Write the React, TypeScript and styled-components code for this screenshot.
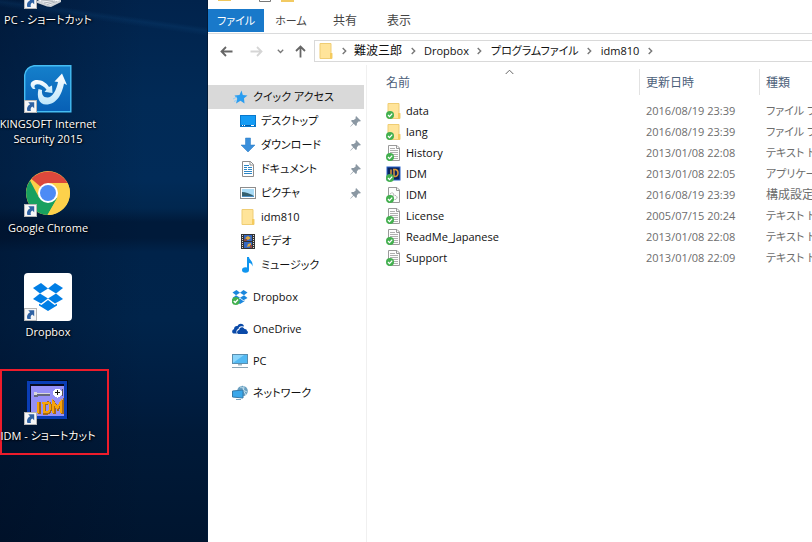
import React from "react";
import styled, { createGlobalStyle } from "styled-components";

const Global = createGlobalStyle`
  *, *::before, *::after { box-sizing: border-box; }
  html, body { margin: 0; padding: 0; overflow: hidden; }
  body, button {
    font-family: "Open Sans", "Noto Sans CJK JP", sans-serif;
    font-size: 11px;
    font-feature-settings: "palt";
    line-height: 16px;
  }
  button { border: 0; padding: 0; margin: 0; background: none; color: inherit; }
  a { color: inherit; text-decoration: none; }
  svg { display: block; flex: none; }
`;

const Screen = styled.div`
  display: grid;
  grid-template-columns: 208px minmax(0, 1fr);
  height: 100vh;
  overflow: hidden;
`;

/* ---------- Desktop ---------- */

const Desktop = styled.aside`
  overflow: hidden;
  border-right: 1px solid #011a38;
  background:
    linear-gradient(8deg, transparent 0 72%, rgba(20, 90, 150, 0.16) 76%, transparent 79%) 0 0 / 100% 100px no-repeat,
    linear-gradient(to right, rgba(0, 10, 30, 0.35), transparent 70%),
    linear-gradient(
      to bottom,
      #01234c 0,
      #012a56 100px,
      #012b58 180px,
      #01274f 208px,
      #001a3a 222px,
      #001a3a 238px,
      #00234a 252px,
      #00244b 320px,
      #001d40 400px,
      #001a39 432px,
      #00152f 100%
    );
`;

const ShortcutList = styled.div`
  display: grid;
  grid-template-columns: 96px;
  grid-auto-rows: 104px;
  margin-top: -39px;
`;

const Shortcut = styled.a`
  position: relative;
  display: flex;
  flex-direction: column;
  align-items: center;
  gap: 3px;
  color: #fff;
  text-shadow: 1px 1px 2px #000, 0 0 2px #000;
`;

const ShortcutIcon = styled.span`
  position: relative;
  width: 48px;
  height: 48px;
  flex: none;
`;

const ArrowBadge = styled.span`
  position: absolute;
  left: 0;
  bottom: 0;
`;

const ShortcutLabel = styled.span`
  z-index: 1;
  line-height: 15px;
  text-align: center;
  white-space: pre;
`;

const Highlight = styled.span`
  position: absolute;
  inset: -8px -13px 26px 0;
  border: 2px solid #ed1c2b;
`;

/* ---------- Explorer window ---------- */

const Explorer = styled.main`
  display: flex;
  flex-direction: column;
  min-width: 0;
  overflow: hidden;
  background: #fff;
  color: #111;
`;

const TitleStrip = styled.div`
  display: flex;
  align-items: flex-start;
  height: 9px;
  padding-left: 10px;
`;

const Ribbon = styled.div`
  display: flex;
  height: 25px;
  border-bottom: 1px solid #dadbdc;
`;

const Tab = styled.button<{ $primary?: boolean; $kanji?: boolean }>`
  width: ${(p) => (p.$primary ? 56 : 54)}px;
  height: 23px;
  background: ${(p) => (p.$primary ? "#1979ca" : "transparent")};
  color: ${(p) => (p.$primary ? "#fff" : "#444")};
  font-size: ${(p) => (p.$kanji ? 12 : 11)}px;
`;

const AddressRow = styled.div`
  display: flex;
  align-items: center;
  height: 28px;
  margin-top: 3px;
  padding-left: 12px;
`;

const NavButton = styled.button<{ $gap?: number }>`
  display: flex;
  align-items: center;
  height: 22px;
  margin-left: ${(p) => p.$gap ?? 0}px;
`;

const AddressBox = styled.nav`
  display: flex;
  flex: 1;
  align-items: center;
  min-width: 0;
  height: 22px;
  margin-left: 7px;
  padding-left: 3px;
  border: 1px solid #d9d9d9;
  border-right: 0;
  white-space: nowrap;
`;

const Crumb = styled.span`
  display: flex;
  align-items: center;
`;

const CrumbButton = styled.button<{ $kanji?: boolean }>`
  font-size: ${(p) => (p.$kanji ? 12 : 11)}px;
`;

const Separator = styled.span<{ $first?: boolean }>`
  display: flex;
  justify-content: center;
  width: ${(p) => (p.$first ? 20 : 22)}px;
`;

const Body = styled.div`
  display: grid;
  grid-template-columns: 159px minmax(0, 1fr);
  flex: 1;
  min-height: 0;
`;

const NavPane = styled.nav`
  padding: 20px 2px 0 0;
  border-right: 1px solid #f0f0f0;
`;

const NavItem = styled.a<{ $level?: number; $active?: boolean; $spaced?: boolean }>`
  display: flex;
  align-items: center;
  gap: 5px;
  height: 24px;
  margin-top: ${(p) => (p.$spaced ? 8 : 0)}px;
  padding: 0 3px 0 ${(p) => (p.$level ? 32 : 24)}px;
  background: ${(p) => (p.$active ? "#d9d9d9" : "transparent")};
  white-space: nowrap;
`;

const NavText = styled.span`
  flex: 1;
`;

const Files = styled.section`
  min-width: 0;
  padding-left: 13px;
  overflow: hidden;
`;

const Table = styled.table`
  width: 100%;
  table-layout: fixed;
  border-collapse: collapse;
`;

const HeadCell = styled.th<{ $w?: number }>`
  position: relative;
  width: ${(p) => (p.$w ? `${p.$w}px` : "auto")};
  height: 35px;
  padding: 0 0 0 6px;
  color: #4c607a;
  font-size: 12px;
  font-weight: 400;
  text-align: left;
  vertical-align: middle;
  &:not(:last-child)::after {
    content: "";
    position: absolute;
    right: 0;
    top: 4px;
    height: 26px;
    border-right: 1px solid #e2e2e2;
  }
`;

const SortMark = styled.span`
  position: absolute;
  top: 4px;
  left: 50%;
  margin-left: -5px;
`;

const Cell = styled.td<{ $soft?: boolean; $kanji?: boolean }>`
  height: 21px;
  padding: 0 0 0 6px;
  overflow: hidden;
  color: ${(p) => (p.$soft ? "#6d6d6d" : "#111")};
  font-size: ${(p) => (p.$kanji ? 12 : 11)}px;
  white-space: nowrap;
`;

const FileName = styled.span`
  display: flex;
  align-items: center;
  gap: 4px;
`;

/* ---------- Icons ---------- */

const ShortcutArrow = () => (
  <svg width="13" height="13" viewBox="0 0 13 13">
    <rect x=".5" y=".5" width="12" height="12" fill="#f6f6f6" stroke="#b5b5b5" />
    <path d="M4.2 2.3h6v6L8.3 6.500C6.800 7.500 6.300 8.900 6.900 11H3.400C2.300 8.300 3.400 5.700 6.100 4.200Z" fill="#2f62a3" />
  </svg>
);

const DriveIcon = () => (
  <svg width="48" height="48" viewBox="0 0 48 48">
    <path d="M12 40l22-2 3 1v2l-10 5-4-.5-11-4z" fill="#cfd3d6" />
    <path d="M13 39l21-2 2 2-10 5z" fill="#f3f4f5" />
    <path d="M17 40l12-1M20 42l11-2M23 43.500l10-3" stroke="#aeb4b9" />
  </svg>
);

const KingsoftIcon = () => (
  <svg width="48" height="48" viewBox="0 0 48 48">
    <defs>
      <linearGradient id="ks" x1="0" y1="0" x2="0" y2="1">
        <stop offset="0" stopColor="#1580cb" />
        <stop offset="1" stopColor="#075fb5" />
      </linearGradient>
      <linearGradient id="ksw" x1="0" y1="0" x2="0" y2="1">
        <stop offset="0" stopColor="#fff" />
        <stop offset="1" stopColor="#bfe6fb" />
      </linearGradient>
    </defs>
    <path d="M10 .7H46.800V46.800H.7V10Q2 2 10 .7Z" fill="url(#ks)" stroke="#45bdf3" strokeWidth="1.400" />
    <path d="M9 24C5.500 21 6 17 10 15.500 16 14 22 17 25 22L28 20.500 28.500 28 20.500 27 22.500 24.500C19 20 13.500 18 11 20 10 21.500 10.500 22.500 11.500 24Z" fill="url(#ksw)" />
    <path d="M14.500 24C12.500 32 15 39.500 22 39.500 33 39.500 38 29 40 18.500L43 20 38 8.500 30.500 16.500 34 17C32.500 25 28.500 32.500 23.500 32.500 19 32.500 17.500 29 18 25Z" fill="url(#ksw)" />
    <path d="M20 27.500l8 1.500" fill="none" stroke="#0a63b3" strokeWidth=".8" />
  </svg>
);

const ChromeIcon = () => (
  <svg width="48" height="48" viewBox="0 0 48 48">
    <circle cx="24" cy="24" r="22" fill="#fcd04a" />
    <path d="M24 24L7.500 10A22 22 0 0 1 43.500 14H24Z" fill="#dc483c" />
    <path d="M6 11.500A22 22 0 0 0 23.500 46L33 29.500 24 24 15 28.500Z" fill="#18a05f" />
    <path d="M24 14H43.500A22 22 0 0 1 23.500 46L33 29.500Z" fill="#fdd14b" />
    <circle cx="24" cy="24" r="10" fill="#fff" />
    <circle cx="24" cy="24" r="8" fill="#4c8bf5" />
  </svg>
);

const DropboxMark = ({ color = "#007ee5" }: { color?: string }) => (
  <g fill={color}>
    <path d="M17 10L24 15.500 16 20.500 9 15Z" />
    <path d="M31 10L39 15 32 20.500 24 15.500Z" />
    <path d="M16 20.500L24 25.500 17 30.500 9 26Z" />
    <path d="M32 20.500L39 26 31 30.500 24 25.500Z" />
    <path d="M24 27L30.500 32 33 30.700V32.500L24 38 15 32.500V30.700L17.500 32Z" />
  </g>
);

const DropboxIcon = () => (
  <svg width="48" height="48" viewBox="0 0 48 48">
    <rect width="48" height="48" rx="4" fill="#fff" />
    <DropboxMark />
  </svg>
);

const IdmIcon = () => (
  <svg width="48" height="48" viewBox="0 0 48 48" shapeRendering="crispEdges">
    <rect x="5" y="3" width="39" height="38" fill="#00081c" />
    <rect x="3" y="4" width="40" height="38" fill="#0a3db5" />
    <rect x="6" y="7" width="34" height="32" fill="#080b22" />
    <rect x="7" y="9" width="33" height="30" fill="#9590f8" />
    <path d="M10 16h4v1h12v2H14v1h-4z" fill="#66697c" />
    <path d="M10 15h3v1h13v1H13v1h-3z" fill="#d8d8dc" />
    <circle cx="33.500" cy="16" r="4.500" fill="#fff" />
    <path d="M31 15h5v1h-5zM33 13h1v5h-1z" fill="#111" />
    <path d="M38 12h1v7h-1z" fill="#555" />
    <g fill="none" stroke="#a96a12" strokeWidth="3">
      <path d="M15.500 25v12M20.500 25v11h3q3 0 3-5.500t-3-4.500h-5M30 37V26l4 6 4-6v11" />
    </g>
    <g fill="none" stroke="#f6a30a" strokeWidth="2">
      <path d="M14 25v11M20 25v10h3q3 0 3-5t-3-4h-5M29 36V25l4 6 4-6v11" />
    </g>
  </svg>
);

const SmallIcon = ({ children }: { children: React.ReactNode }) => (
  <svg width="16" height="16" viewBox="0 0 16 16">{children}</svg>
);

const FolderShape = () => (
  <>
    <path d="M2 .5h11v9l1 1v5H2z" fill="#ffe49a" stroke="#efcd74" />
    <path d="M12 10h2v5.500h-2z" fill="#f5cb5d" />
  </>
);

const CheckBadge = () => (
  <>
    <circle cx="4" cy="12" r="4" fill="#43b04f" />
    <path d="M2 12l1.500 1.600L6.200 10.600" fill="none" stroke="#fff" strokeWidth="1.300" />
  </>
);

const PageShape = ({ gear }: { gear?: boolean }) => (
  <>
    <path d="M2.500 .5H11l2.500 2.500v12.500h-11z" fill="#fdfdfd" stroke="#9a9a9a" />
    <path d="M10.500 .5v3h3" fill="none" stroke="#9a9a9a" />
    {gear ? (
      <g fill="none" stroke="#999">
        <circle cx="6" cy="7.500" r="1.700" strokeDasharray="1 .7" />
        <circle cx="9" cy="10.500" r="2" strokeDasharray="1 .7" />
      </g>
    ) : (
      <path d="M4 3.500h5M4 5.500h8M4 7.500h8M4 9.500h8M4 11.500h8M4 13.500h8" stroke="#b0b0b0" />
    )}
  </>
);

type FileKind = "folder" | "text" | "app" | "config";

const FileIcon = ({ kind }: { kind: FileKind }) => (
  <SmallIcon>
    {kind === "folder" && <FolderShape />}
    {kind === "text" && <PageShape />}
    {kind === "config" && <PageShape gear />}
    {kind === "app" && (
      <>
        <rect x="1" y="1" width="13" height="13" fill="#0b2560" stroke="#2a62c9" />
        <path d="M5 3.500v7M8 3.500v7h1.500q2.500-.5 2.500-3.500T9.500 3.500H7" fill="none" stroke="#d9993a" strokeWidth="1.500" />
      </>
    )}
    <CheckBadge />
  </SmallIcon>
);

const StarIcon = () => (
  <SmallIcon>
    <path d="M9.500 1.500L10.800 6 15.500 6.500 12 9.300 12.500 14.500 8.500 11.700 4 14.500 5.300 9.700 2.500 6.500 7.500 6Z" fill="#2a9df0" />
    <path d="M5 8L1 10M5 11L2 12.500" stroke="#8fcdf8" />
  </SmallIcon>
);
const DesktopIcon = () => (
  <SmallIcon>
    <rect x=".5" y="2.500" width="15" height="11" fill="#149cf5" stroke="#0878cc" />
    <path d="M1 12.500h14" stroke="#055da8" />
    <path d="M2 12.500h1M4 12.500h1M11 12.500h3" stroke="#fff" />
  </SmallIcon>
);
const DownloadIcon = () => (
  <SmallIcon>
    <path d="M5.500 1h5v7H15L8 15 1 8h4.500z" fill="#3a8fdb" stroke="#2678c2" strokeWidth=".5" />
  </SmallIcon>
);
const DocumentIcon = () => (
  <SmallIcon>
    <path d="M2.500 .5h8l3 3v12h-11z" fill="#fff" stroke="#8c8c8c" />
    <path d="M10 .5V4h3.500" fill="none" stroke="#8c8c8c" />
    <path d="M4 4.500h5M4 6.500h3M8 6.500h4M4 8.500h3M8 8.500h4M4 10.500h8M4 12.500h8" stroke="#2d86c5" />
  </SmallIcon>
);
const PictureIcon = () => (
  <SmallIcon>
    <rect x=".5" y="2.500" width="15" height="11" fill="#fff" stroke="#8d8d8d" />
    <path d="M2 4h12v8H2z" fill="#a9dbf6" />
    <path d="M2 7q5 0 12 4v1H2z" fill="#355f6e" />
    <path d="M2 11h12v1H2z" fill="#4c8fc4" />
  </SmallIcon>
);
const FolderIcon = () => (
  <SmallIcon>
    <FolderShape />
  </SmallIcon>
);
const VideoIcon = () => (
  <SmallIcon>
    <path d="M1 1h14v15H1z" fill="#333" />
    <path d="M2.500 2v13M13.500 2v13" stroke="#ddd" strokeDasharray="1 1" />
    <path d="M4 2h8v6H4zM4 9h8v6H4z" fill="#3568c0" />
    <path d="M5 5l3-2 3 2-3 2zM8 11l3-1v3l-4 1z" fill="#e0a73a" />
    <path d="M4 6h3v2H4zM10 12h2v3h-2z" fill="#8c4a4b" />
  </SmallIcon>
);
const MusicIcon = () => (
  <SmallIcon>
    <ellipse cx="5.500" cy="13" rx="3.500" ry="2.700" fill="#0f95ef" />
    <path d="M7 0h2c0 3 4.500 4 3.500 9.500C12 7 10.500 6 9 6v7H7z" fill="#0f95ef" />
  </SmallIcon>
);
const DropboxSmall = () => (
  <svg width="16" height="16" viewBox="8 8 32 32">
    <DropboxMark color="#1b87dd" />
    <circle cx="15.500" cy="32" r="8" fill="#43b04f" />
    <path d="M11.500 32l3 3 5.500-6" fill="none" stroke="#fff" strokeWidth="2.500" />
  </svg>
);
const OneDriveIcon = () => (
  <SmallIcon>
    <path d="M1.500 12.500C-.5 12 -.2 8.500 2 8.200 2 5.500 4 4.500 5.500 5 7 2 11 2.200 12 5.200L11 5.500C8.500 4.500 6.500 6 6.500 8 4.500 8.300 3.800 11 5 12.500Z" fill="#0b4aa8" />
    <path d="M6.500 13C4.500 12.500 4.500 9.300 7.200 9 7.300 6 11 5 12.500 8 14.500 7.800 15 9 14.800 9.700 16.500 10.300 16.200 12.800 14.700 13Z" fill="#0b4aa8" />
  </SmallIcon>
);
const PcIcon = () => (
  <SmallIcon>
    <rect x=".5" y="1.500" width="15" height="9" fill="#52b9f3" stroke="#5a8eae" />
    <path d="M1 10V2h11z" fill="#8ad5fb" />
    <path d="M6 11h4v1.500H6z" fill="#9fb4c0" />
    <path d="M0 14.500h16" stroke="#8ba5b5" />
  </SmallIcon>
);
const NetworkIcon = () => (
  <SmallIcon>
    <circle cx="10.500" cy="6" r="5.300" fill="#6a9fc0" />
    <path d="M8 2q4 0 3 3l4 2M12 1q-2 5 2 9" fill="none" stroke="#c5e2ef" />
    <path d="M.5 6l10.500-1v8L.5 12z" fill="#39a7ea" stroke="#3579a8" />
    <path d="M4 14.500h5" stroke="#7aa3bd" />
  </SmallIcon>
);

const PinIcon = () => (
  <svg width="11" height="11" viewBox="0 0 10 10">
    <path d="M5.500 0L10 4.500 8.700 5 8 4.800 6.300 6.700 6.200 8.500 5.300 9 3.300 7 .5 9.800 .2 9.500 2.900 6.600 1 4.600 1.600 3.700 3.500 3.700 5.300 2 5 1.200Z" fill="#8b98a3" />
  </svg>
);

const Chevron = () => (
  <svg width="5" height="8" viewBox="0 0 5 8">
    <path d="M.7 1l3 3-3 3" fill="none" stroke="#777" strokeWidth="1.400" />
  </svg>
);

const Arrow = ({ color, turn = 0 }: { color: string; turn?: number }) => (
  <svg width="13" height="13" viewBox="0 0 13 13">
    <path
      d="M12.500 6.500H1.500M6 2L1.500 6.500 6 11"
      fill="none"
      stroke={color}
      strokeWidth="1.800"
      transform={`rotate(${turn} 6.500 6.500)`}
    />
  </svg>
);

/* ---------- Data ---------- */

const shortcuts = [
  { label: "PC - ショートカット", Icon: DriveIcon },
  { label: "KINGSOFT Internet\nSecurity 2015", Icon: KingsoftIcon },
  { label: "Google Chrome", Icon: ChromeIcon },
  { label: "Dropbox", Icon: DropboxIcon },
  { label: "IDM - ショートカット", Icon: IdmIcon, marked: true },
];

const quickItems = [
  { label: "デスクトップ", Icon: DesktopIcon, pinned: true },
  { label: "ダウンロード", Icon: DownloadIcon, pinned: true },
  { label: "ドキュメント", Icon: DocumentIcon, pinned: true },
  { label: "ピクチャ", Icon: PictureIcon, pinned: true },
  { label: "idm810", Icon: FolderIcon },
  { label: "ビデオ", Icon: VideoIcon },
  { label: "ミュージック", Icon: MusicIcon },
];

const roots = [
  { label: "Dropbox", Icon: DropboxSmall },
  { label: "OneDrive", Icon: OneDriveIcon },
  { label: "PC", Icon: PcIcon },
  { label: "ネットワーク", Icon: NetworkIcon },
];

const files: { name: string; date: string; type: string; kind: FileKind }[] = [
  { name: "data", date: "2016/08/19 23:39", type: "ファイル フォルダー", kind: "folder" },
  { name: "lang", date: "2016/08/19 23:39", type: "ファイル フォルダー", kind: "folder" },
  { name: "History", date: "2013/01/08 22:08", type: "テキスト ドキュメント", kind: "text" },
  { name: "IDM", date: "2013/01/08 22:05", type: "アプリケーション", kind: "app" },
  { name: "IDM", date: "2016/08/19 23:39", type: "構成設定", kind: "config" },
  { name: "License", date: "2005/07/15 20:24", type: "テキスト ドキュメント", kind: "text" },
  { name: "ReadMe_Japanese", date: "2013/01/08 22:08", type: "テキスト ドキュメント", kind: "text" },
  { name: "Support", date: "2013/01/08 22:09", type: "テキスト ドキュメント", kind: "text" },
];

const crumbs = [
  { label: "難波三郎", kanji: true },
  { label: "Dropbox" },
  { label: "プログラムファイル" },
  { label: "idm810" },
];

export default function App() {
  return (
    <>
      <Global />
      <Screen>
        <Desktop>
          <ShortcutList>
            {shortcuts.map(({ label, Icon, marked }) => (
              <Shortcut key={label} href="#">
                <ShortcutIcon>
                  <Icon />
                  <ArrowBadge>
                    <ShortcutArrow />
                  </ArrowBadge>
                </ShortcutIcon>
                <ShortcutLabel>{label}</ShortcutLabel>
                {marked && <Highlight />}
              </Shortcut>
            ))}
          </ShortcutList>
        </Desktop>

        <Explorer>
          <TitleStrip>
            <svg width="78" height="2" viewBox="0 0 78 2">
              <path d="M0 0h13v1H0z" fill="#efc75e" />
              <path d="M41.500 0v1.500h11V0" fill="none" stroke="#777" />
              <path d="M63 0h13v2H63z" fill="#f2ca62" />
            </svg>
          </TitleStrip>
          <Ribbon>
            <Tab $primary>ファイル</Tab>
            <Tab>ホーム</Tab>
            <Tab $kanji>共有</Tab>
            <Tab $kanji>表示</Tab>
          </Ribbon>
          <AddressRow>
            <NavButton aria-label="Back"><Arrow color="#666" /></NavButton>
            <NavButton $gap={17} aria-label="Forward"><Arrow color="#d5d5d5" turn={180} /></NavButton>
            <NavButton $gap={14} aria-label="Recent">
              <svg width="7" height="5" viewBox="0 0 7 5">
                <path d="M.8 .8l2.700 2.700L6.200 .8" fill="none" stroke="#777" strokeWidth="1.300" />
              </svg>
            </NavButton>
            <NavButton $gap={10} aria-label="Up"><Arrow color="#666" turn={90} /></NavButton>
            <AddressBox aria-label="Path">
              <FolderIcon />
              <Separator $first><Chevron /></Separator>
              {crumbs.map(({ label, kanji }) => (
                <Crumb key={label}>
                  <CrumbButton $kanji={kanji}>{label}</CrumbButton>
                  <Separator><Chevron /></Separator>
                </Crumb>
              ))}
            </AddressBox>
          </AddressRow>
          <Body>
            <NavPane>
              <NavItem href="#" $active>
                <StarIcon />
                <NavText>クイック アクセス</NavText>
              </NavItem>
              {quickItems.map(({ label, Icon, pinned }) => (
                <NavItem key={label} href="#" $level={1}>
                  <Icon />
                  <NavText>{label}</NavText>
                  {pinned && <PinIcon />}
                </NavItem>
              ))}
              {roots.map(({ label, Icon }) => (
                <NavItem key={label} href="#" $spaced>
                  <Icon />
                  <NavText>{label}</NavText>
                </NavItem>
              ))}
            </NavPane>
            <Files>
              <Table>
                <thead>
                  <tr>
                    <HeadCell $w={260}>
                      名前
                      <SortMark>
                        <svg width="9" height="6" viewBox="0 0 9 6">
                          <path d="M.7 5l3.800-3.800L8.300 5" fill="none" stroke="#666" />
                        </svg>
                      </SortMark>
                    </HeadCell>
                    <HeadCell $w={120}>更新日時</HeadCell>
                    <HeadCell>種類</HeadCell>
                  </tr>
                </thead>
                <tbody>
                  {files.map((f) => (
                    <tr key={f.name + f.kind}>
                      <Cell>
                        <FileName>
                          <FileIcon kind={f.kind} />
                          {f.name}
                        </FileName>
                      </Cell>
                      <Cell $soft>{f.date}</Cell>
                      <Cell $soft $kanji={f.kind === "config"}>{f.type}</Cell>
                    </tr>
                  ))}
                </tbody>
              </Table>
            </Files>
          </Body>
        </Explorer>
      </Screen>
    </>
  );
}
